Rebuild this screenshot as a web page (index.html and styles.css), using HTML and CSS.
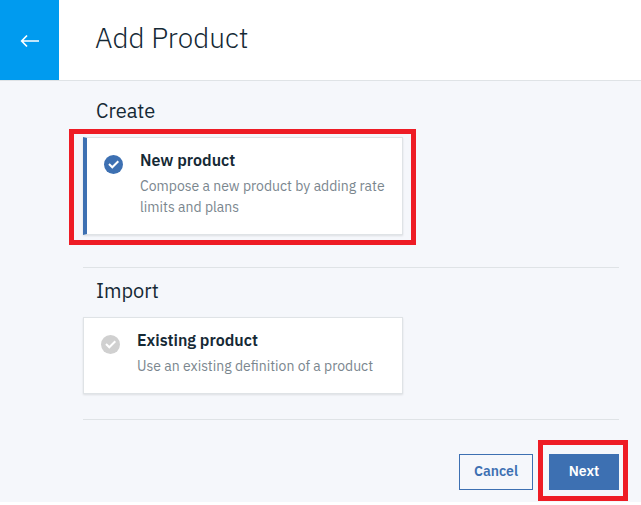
FILE: index.html
```html
<!DOCTYPE html>
<html lang="en">
<head>
<meta charset="utf-8">
<title>Add Product</title>
<link rel="stylesheet" href="styles.css">
</head>
<body>
<div class="page">
  <header class="header">
    <a class="back" href="#" aria-label="Back">
      <svg width="20" height="14" viewBox="0 0 20 14" fill="none" stroke="#fff" stroke-width="1.7"><path d="M19 7H2M7 1.5 1.7 7 7 12.5"/></svg>
    </a>
    <h1 class="title">Add Product</h1>
  </header>
  <main class="content">
    <section class="section create">
      <h2 class="heading">Create</h2>
      <div class="card selected marked">
        <svg class="check" width="19" height="19" viewBox="0 0 19 19" fill="none"><circle cx="9.5" cy="9.5" r="9.5" fill="#3d70b2"/><path d="m5 9 3.3 3.3 6-6" stroke="#fff" stroke-width="2"/></svg>
        <div class="text">
          <h3 class="name">New product</h3>
          <p class="desc">Compose a new product by adding rate<br>limits and plans</p>
        </div>
      </div>
    </section>
    <section class="section import">
      <h2 class="heading">Import</h2>
      <div class="card">
        <svg class="check" width="19" height="19" viewBox="0 0 19 19" fill="none"><circle cx="9.5" cy="9.5" r="9.5" fill="#d0d0d0"/><path d="m5 9 3.3 3.3 6-6" stroke="#fff" stroke-width="2"/></svg>
        <div class="text">
          <h3 class="name">Existing product</h3>
          <p class="desc">Use an existing definition of a product</p>
        </div>
      </div>
    </section>
    <div class="actions">
      <button class="btn cancel">Cancel</button>
      <button class="btn next marked">Next</button>
    </div>
  </main>
</div>
</body>
</html>
```
FILE: styles.css
```css
* { box-sizing: border-box; }
body {
  margin: 0;
  background: #fff;
  color: #152935;
  font-family: "IBM Plex Sans", Roboto, "Liberation Sans", sans-serif;
}
h1, h2, h3, p { margin: 0; }
.page { height: 502px; background: #f5f7fb; }
.header {
  display: flex;
  height: 81px;
  background: #fff;
  border-bottom: 1px solid #dfe3e6;
}
.back {
  display: flex;
  align-items: center;
  justify-content: center;
  width: 59px;
  height: 80px;
  padding: 2px 0 0 1px;
  background: #009bef;
}
.title {
  padding: 18px 0 0 36px;
  font-size: 28px;
  line-height: 40px;
  font-weight: 300;
}
.content { padding: 0 22px 0 83px; }
.section { border-bottom: 1px solid #dfe3e6; }
.create { height: 187px; padding-top: 16px; }
.import { height: 152px; padding-top: 9px; }
.heading {
  height: 40px;
  padding-left: 13px;
  font-size: 20px;
  line-height: 28px;
  font-weight: 400;
}
.card {
  display: flex;
  gap: 17px;
  width: 320px;
  height: 77px;
  padding: 12px 17px 0;
  background: #fff;
  border: 1px solid #dfe3e6;
  box-shadow: 0 1px 2px rgba(0, 0, 0, .1);
}
.selected { height: 98px; border-left: 4px solid #3d70b2; }
.check { flex: none; margin-top: 5px; }
.text { white-space: nowrap; }
.name { font-size: 16px; line-height: 21px; font-weight: 600; }
.desc { margin-top: 5px; font-size: 14px; line-height: 21px; color: #7a868e; }
.marked { position: relative; }
.marked::after {
  content: "";
  position: absolute;
  border: 5px solid #ee1c25;
}
.card.marked::after { inset: -9px -14px -11px -18px; }
.btn.marked::after { inset: -14px -9px -11px -11px; }
.actions {
  display: flex;
  justify-content: flex-end;
  gap: 16px;
  padding-top: 34px;
}
.btn {
  height: 36px;
  padding: 0 0 2px;
  border: 1px solid #3d70b2;
  font: 600 14px/20px "IBM Plex Sans", Roboto, "Liberation Sans", sans-serif;
}
.cancel { width: 74px; background: transparent; color: #3d70b2; }
.next { width: 70px; border: 0; background: #3d70b2; color: #fff; }
```
